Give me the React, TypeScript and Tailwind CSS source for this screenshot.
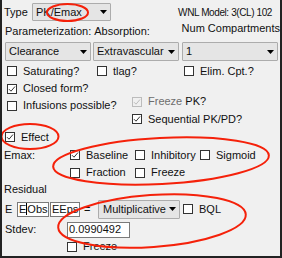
import type React from "react"

interface CheckProps {
  checked?: boolean
  disabled?: boolean
}

function Check({ checked = false, disabled = false }: CheckProps) {
  return (
    <span
      className={`flex h-[10px] w-[10px] shrink-0 items-center justify-center border ${
        disabled ? "border-[#bcbcbc] bg-[#f0f0f0]" : "border-[#333] bg-white"
      }`}
    >
      {checked && (
        <svg width="8" height="8" viewBox="0 0 8 8">
          <path d="M1 4.2 3 6.2 7 1.5" fill="none" stroke={disabled ? "#bcbcbc" : "#333"} strokeWidth="1" />
        </svg>
      )}
    </span>
  )
}

function CheckLabel({
  label,
  checked,
  disabled,
  className = "",
}: {
  label: React.ReactNode
  checked?: boolean
  disabled?: boolean
  className?: string
}) {
  return (
    <div className={`flex items-center gap-[6px] ${className}`}>
      <Check checked={checked} disabled={disabled} />
      <span className="whitespace-nowrap">{label}</span>
    </div>
  )
}

function Arrow() {
  return (
    <svg width="7" height="4" viewBox="0 0 7 4" className="shrink-0">
      <path d="M0 0h7L3.5 4z" fill="#000" />
    </svg>
  )
}

// combobox in DropDownList style
function Combo({ value, className }: { value: string; className: string }) {
  return (
    <div
      className={`flex items-center justify-between rounded-[1px] border border-[#acacac] bg-[#e5e5e5] pl-[3px] pr-[3px] ${className}`}
    >
      <span className="whitespace-nowrap">{value}</span>
      <Arrow />
    </div>
  )
}

export default function App() {
  return (
    <div className="relative h-[258px] w-[282px] overflow-hidden border-b-2 border-l-2 border-r-2 border-[#222] bg-[#f0f0f0] font-['Liberation_Sans',Arial,sans-serif] text-[11px] leading-[13px] text-[#111]">
      {/* Type row */}
      <div className="mt-[3px] flex h-[18px] items-center">
        <span className="ml-[2px] w-[28px]">Type</span>
        <Combo value="PK/Emax" className="h-[18px] w-[79px]" />
        <span className="ml-auto mr-[8px] mt-[1px] text-[10px] tracking-[-0.4px]">WNL Model: 3(CL) 102</span>
      </div>

      {/* labels */}
      <div className="flex h-[21px] items-start">
        <span className="ml-[3px] mt-[4px] w-[90px]">Parameterization:</span>
        <span className="mt-[4px] w-[85px]">Absorption:</span>
        <span className="ml-[3px] mt-[1px] whitespace-nowrap">Num Compartments</span>
      </div>

      {/* dropdowns */}
      <div className="flex h-[20px] items-start">
        <Combo value="Clearance" className="ml-[3px] h-[19px] w-[86px]" />
        <Combo value="Extravascular" className="ml-[2px] h-[19px] w-[86px]" />
        <Combo value="1" className="ml-[3px] h-[19px] w-[96px]" />
      </div>

      {/* Saturating / tlag / Elim */}
      <div className="flex h-[18px] items-center pl-[5px]">
        <CheckLabel label="Saturating?" className="w-[90px]" />
        <CheckLabel label="tlag?" className="w-[87px]" />
        <CheckLabel label="Elim. Cpt.?" />
      </div>

      {/* closed form / infusions + freeze / sequential */}
      <div className="flex h-[48px]">
        <div className="flex w-[130px] flex-col pl-[5px]">
          <div className="flex h-[17px] items-center">
            <CheckLabel label="Closed form?" checked />
          </div>
          <div className="flex h-[17px] items-center">
            <CheckLabel label="Infusions possible?" />
          </div>
        </div>
        <div className="flex flex-col pt-[13px]">
          <div className="flex h-[17px] items-center">
            <CheckLabel
              label={
                <>
                  <span className="text-[#6d6d6d]">Freeze</span> PK?
                </>
              }
              checked
              disabled
            />
          </div>
          <div className="flex h-[18px] items-center">
            <CheckLabel label="Sequential PK/PD?" checked />
          </div>
        </div>
      </div>

      {/* Effect */}
      <div className="flex h-[18px] items-center pl-[3px]">
        <CheckLabel label="Effect" checked />
      </div>

      {/* Emax options */}
      <div className="flex h-[18px] items-center">
        <span className="ml-[2px] w-[66px]">Emax:</span>
        <CheckLabel label="Baseline" checked className="w-[65px]" />
        <CheckLabel label="Inhibitory" className="w-[65px]" />
        <CheckLabel label="Sigmoid" />
      </div>
      <div className="flex h-[17px] items-center pl-[68px]">
        <CheckLabel label="Fraction" className="w-[65px]" />
        <CheckLabel label="Freeze" />
      </div>

      {/* Residual */}
      <div className="flex h-[16px] items-center pl-[2px]">Residual</div>

      <div className="mt-[2px] flex h-[20px] items-center">
        <span className="ml-[3px] w-[12px]">E</span>
        <div className="flex h-[15px] w-[32px] items-center border border-[#7a7a7a] bg-white pl-[1px]">
          E<span className="h-[12px] w-px bg-black" />Obs
        </div>
        <div className="ml-px flex h-[15px] w-[30px] items-center border border-[#7a7a7a] bg-white pl-[1px]">EEps</div>
        <span className="ml-[4px] w-[14px]">=</span>
        <Combo value="Multiplicative" className="h-[19px] w-[82px] pl-[4px]" />
        <CheckLabel label="BQL" className="ml-[3px]" />
      </div>

      <div className="mt-[2px] flex h-[17px] items-center">
        <span className="ml-[3px] w-[62px]">Stdev:</span>
        <div className="flex h-[16px] w-[63px] items-center border border-[#7a7a7a] bg-white pl-[1px]">0.0990492</div>
      </div>

      <div className="flex h-[17px] items-center pl-[65px]">
        <CheckLabel label="Freeze" />
      </div>

      {/* red annotation ellipses */}
      <svg className="pointer-events-none absolute left-[-2px] top-0" width="282" height="258" viewBox="0 0 282 258">
        <g fill="none" stroke="#f5210a" strokeWidth="2">
          <ellipse cx="67.5" cy="12.5" rx="20.5" ry="8.5" />
          <ellipse cx="30" cy="136.5" rx="28.5" ry="12.5" />
          <ellipse cx="161" cy="161" rx="108" ry="23" transform="rotate(-3 161 161)" />
          <ellipse cx="152" cy="221" rx="94" ry="26" transform="rotate(-4 152 221)" />
        </g>
      </svg>
    </div>
  )
}
